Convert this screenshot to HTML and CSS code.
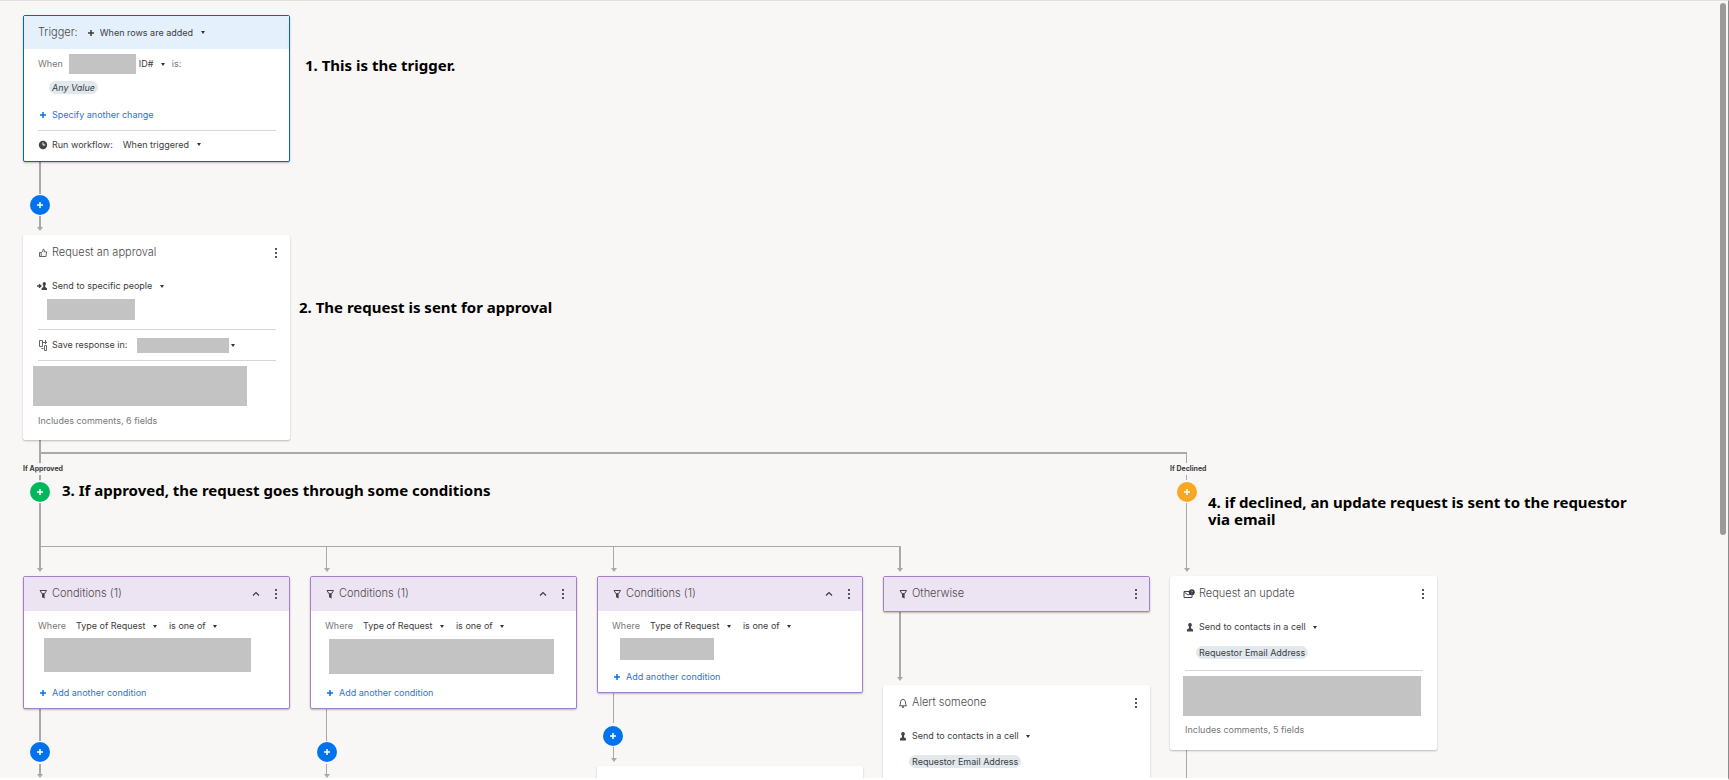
FILE: index.html
```html
<!DOCTYPE html>
<html lang="en">
<head>
<meta charset="utf-8">
<title>Workflow</title>
<link rel="stylesheet" href="styles.css">
</head>
<body>
<svg class="defs" aria-hidden="true">
  <symbol id="plus" viewBox="0 0 8 8"><path d="M4 1v6M1 4h6" stroke="currentColor" stroke-width="1.5" fill="none"/></symbol>
  <symbol id="kebab" viewBox="0 0 4 12"><path d="M1 1h2v2H1zM1 5h2v2H1zM1 9h2v2H1z" fill="currentColor"/></symbol>
  <symbol id="funnel" viewBox="0 0 10 10"><path d="M2 1.500h6.500L6.500 4.800H4z" fill="none" stroke="currentColor"/><path d="M4 4.500h2.600V9.500L4 8.200z" fill="currentColor"/></symbol>
  <symbol id="person" viewBox="0 0 10 10"><path d="M5 1a1.900 1.900 0 0 1 1 3.500V6.200L8 7.500V9.500H2V7.500L4 6.200V4.500A1.900 1.900 0 0 1 5 1z" fill="currentColor"/></symbol>
  <symbol id="up" viewBox="0 0 8 8"><path d="M1 5.500L4 2.500l3 3" fill="none" stroke="currentColor" stroke-width="1.200"/></symbol>
</svg>

<main class="canvas">
  <svg class="wires" aria-hidden="true">
    <g class="thick">
      <path d="M40 162v32M40 216v12M40 440v23M40 453H1187M40 475v5M40 503v66M40 709v32M40 764v11M900 546v23M900 612v66"/>
    </g>
    <g class="thin">
      <path d="M40 546.500H901M326.500 546v23M613.500 546v23M326.500 709v32M326.500 764v11M613.500 692v31M613.500 747v12M1186.500 453v10M1186.500 475v5M1186.500 503v66M1186.500 750v30"/>
    </g>
    <g class="heads">
      <path d="M37 227h6l-3 4zM37 568h6l-3 4zM324 568h6l-3 4zM611 568h6l-3 4zM897 568h6l-3 4zM1184 568h6l-3 4zM897 677h6l-3 4zM37 774h6l-3 4zM324 774h6l-3 4zM611 758h6l-3 4z"/>
    </g>
  </svg>

  <section class="node trigger">
    <header class="head">
      <h2>Trigger:</h2>
      <svg class="i8"><use href="#plus"/></svg>
      <label class="pick"><select aria-label="Trigger type"><option>When rows are added</option></select></label>
    </header>
    <div class="row when">
      <span class="muted">When</span><span class="mask m-col"></span>
      <label class="pick"><select aria-label="Column"><option>ID#</option></select></label>
      <span class="muted">is:</span>
    </div>
    <div class="row pills"><em class="pill">Any Value</em></div>
    <div class="row add"><button class="link"><svg class="i8"><use href="#plus"/></svg>Specify another change</button></div>
    <hr>
    <div class="row run">
      <svg class="icon" viewBox="0 0 10 10"><circle cx="5" cy="5" r="4.200" fill="#444"/><path d="M5 2.500V5h2.200" stroke="#fff" fill="none"/></svg>
      <span>Run workflow:</span>
      <label class="pick"><select aria-label="Run workflow"><option>When triggered</option></select></label>
    </div>
  </section>

  <section class="node approval">
    <header class="head">
      <svg class="icon" viewBox="0 0 10 10"><path d="M1.500 4.500h1.700v4H1.500zM3.200 4.700L4.800 3l.3-1.800c1.200-.2 1.500 .9 1 2.600h2.500l-.6 4.700H3.200" fill="none" stroke="#555" stroke-width=".9"/></svg>
      <h2>Request an approval</h2>
      <button class="more" aria-label="More"><svg><use href="#kebab"/></svg></button>
    </header>
    <div class="row send">
      <svg class="icon lead" viewBox="0 0 10 10"><path d="M0 5h3.500M2 3.200L4 5 2 6.800" fill="none" stroke="#444" stroke-width="1.300"/><path d="M7.200 1a1.800 1.900 0 0 1 1 3.400v1.700L10 7.300V9H4.600V7.300L6.300 6.100V4.400A1.800 1.900 0 0 1 7.200 1z" fill="#444"/></svg>
      <label class="pick"><select aria-label="Recipients"><option>Send to specific people</option></select></label>
    </div>
    <span class="mask m-people"></span>
    <hr>
    <div class="row save">
      <svg class="icon tall" viewBox="0 0 10 12"><path d="M1.500 1.500h3v6h-3zM6.500 6.500h2v5h-2zM3.500 9.500h2M5 3.500h4M7.500 1v4" fill="none" stroke="#666"/></svg>
      <span>Save response in:</span>
      <span class="mask m-save"></span><span class="pick"></span>
    </div>
    <hr>
    <span class="mask m-message"></span>
    <p class="note">Includes comments, 6 fields</p>
  </section>

  <section class="node cond c1">
    <header class="head">
      <svg class="icon"><use href="#funnel"/></svg><h2>Conditions (1)</h2>
      <button class="fold" aria-label="Collapse"><svg><use href="#up"/></svg></button>
      <button class="more" aria-label="More"><svg><use href="#kebab"/></svg></button>
    </header>
    <div class="row where"><span class="muted">Where</span>
      <label class="pick"><select aria-label="Field"><option>Type of Request</option></select></label>
      <label class="pick"><select aria-label="Operator"><option>is one of</option></select></label></div>
    <span class="mask m-c1"></span>
    <div class="row add"><button class="link"><svg class="i8"><use href="#plus"/></svg>Add another condition</button></div>
  </section>

  <section class="node cond c2">
    <header class="head">
      <svg class="icon"><use href="#funnel"/></svg><h2>Conditions (1)</h2>
      <button class="fold" aria-label="Collapse"><svg><use href="#up"/></svg></button>
      <button class="more" aria-label="More"><svg><use href="#kebab"/></svg></button>
    </header>
    <div class="row where"><span class="muted">Where</span>
      <label class="pick"><select aria-label="Field"><option>Type of Request</option></select></label>
      <label class="pick"><select aria-label="Operator"><option>is one of</option></select></label></div>
    <span class="mask m-c2"></span>
    <div class="row add"><button class="link"><svg class="i8"><use href="#plus"/></svg>Add another condition</button></div>
  </section>

  <section class="node cond c3">
    <header class="head">
      <svg class="icon"><use href="#funnel"/></svg><h2>Conditions (1)</h2>
      <button class="fold" aria-label="Collapse"><svg><use href="#up"/></svg></button>
      <button class="more" aria-label="More"><svg><use href="#kebab"/></svg></button>
    </header>
    <div class="row where"><span class="muted">Where</span>
      <label class="pick"><select aria-label="Field"><option>Type of Request</option></select></label>
      <label class="pick"><select aria-label="Operator"><option>is one of</option></select></label></div>
    <span class="mask m-c3"></span>
    <div class="row add"><button class="link"><svg class="i8"><use href="#plus"/></svg>Add another condition</button></div>
  </section>

  <section class="node cond otherwise">
    <header class="head">
      <svg class="icon"><use href="#funnel"/></svg><h2>Otherwise</h2>
      <button class="more" aria-label="More"><svg><use href="#kebab"/></svg></button>
    </header>
  </section>

  <section class="node alert">
    <header class="head">
      <svg class="icon" viewBox="0 0 10 10"><path d="M1.500 7.800C3 6.800 2 3.500 3.200 2.200c1-1 2.600-1 3.600 0C8 3.500 7 6.800 8.500 7.800z" fill="none" stroke="#555"/><path d="M4 9h2" stroke="#555" stroke-width="1.500"/></svg>
      <h2>Alert someone</h2>
      <button class="more" aria-label="More"><svg><use href="#kebab"/></svg></button>
    </header>
    <div class="row send">
      <svg class="icon"><use href="#person"/></svg>
      <label class="pick"><select aria-label="Recipients"><option>Send to contacts in a cell</option></select></label>
    </div>
    <div class="row pills"><span class="pill">Requestor Email Address</span></div>
  </section>

  <section class="node update">
    <header class="head">
      <svg class="icon wide" viewBox="0 0 12 10"><path d="M6 2.500H1v6h8V6M1.200 3L5 6l2-1" fill="none" stroke="#444"/><circle cx="8.800" cy="3.200" r="2.900" fill="#333"/><path d="M8 2.500c.2-1 1.800-.8 1.500 .2L8.800 3.600M8.800 4.300v.9" fill="none" stroke="#ddd" stroke-width=".6"/></svg>
      <h2>Request an update</h2>
      <button class="more" aria-label="More"><svg><use href="#kebab"/></svg></button>
    </header>
    <div class="row send">
      <svg class="icon"><use href="#person"/></svg>
      <label class="pick"><select aria-label="Recipients"><option>Send to contacts in a cell</option></select></label>
    </div>
    <div class="row pills"><span class="pill">Requestor Email Address</span></div>
    <hr>
    <span class="mask m-update"></span>
    <p class="note">Includes comments, 5 fields</p>
  </section>

  <section class="node next" aria-label="Next step"></section>

  <button class="plus p1" aria-label="Add step"><svg class="i8"><use href="#plus"/></svg></button>
  <button class="plus green p2" aria-label="Add approved step"><svg class="i8"><use href="#plus"/></svg></button>
  <button class="plus amber p3" aria-label="Add declined step"><svg class="i8"><use href="#plus"/></svg></button>
  <button class="plus p4" aria-label="Add step"><svg class="i8"><use href="#plus"/></svg></button>
  <button class="plus p5" aria-label="Add step"><svg class="i8"><use href="#plus"/></svg></button>
  <button class="plus p6" aria-label="Add step"><svg class="i8"><use href="#plus"/></svg></button>

  <span class="branch b1">If Approved</span>
  <span class="branch b2">If Declined</span>

  <p class="callout n1">1. This is the trigger.</p>
  <p class="callout n2">2. The request is sent for approval</p>
  <p class="callout n3">3. If approved, the request goes through some conditions</p>
  <p class="callout n4">4. if declined, an update request is sent to the requestor via email</p>

  <div class="scrollbar"></div>
</main>
</body>
</html>
```
FILE: styles.css
```css
* { box-sizing: border-box; }
body { margin: 0; font: 9px/14px Inter, "Liberation Sans", sans-serif; color: #3c3c3c; }
h2, p { margin: 0; }
button, select { font: inherit; color: inherit; background: none; border: 0; padding: 0; margin: 0; }
.defs { position: absolute; width: 0; height: 0; }

.canvas {
  position: relative;
  height: 100vh;
  overflow: hidden;
  background: #f8f7f5;
  border-top: 1px solid #e0e0df;
  border-right: 1px solid #8c8c8c;
  border-bottom: 2px solid #fff;
}
.wires { position: absolute; left: 0; top: -1px; width: 100%; height: calc(100% + 1px); }
.wires path { fill: none; stroke: #aaa9a8; }
.thick path { stroke-width: 2; }
.wires .heads path { fill: #aaa9a8; stroke: none; }

/* Nodes on the canvas */
.node {
  position: absolute;
  width: 267px;
  background: #fff;
  border: 1px solid #fff;
  border-radius: 2px;
  box-shadow: 0 1px 2px rgba(0, 0, 0, .25);
  padding-bottom: 12px;
}
.trigger { left: 23px; top: 14px; border-color: #0b5fd6; padding-bottom: 3px; }
.approval { left: 23px; top: 234px; padding-bottom: 11px; }
.cond { top: 575px; border-color: #a67fc9; padding-bottom: 5px; }
.c1 { left: 23px; }
.c2 { left: 310px; }
.c3 { left: 597px; width: 266px; }
.otherwise { left: 883px; padding-bottom: 0; }
.alert { left: 883px; top: 684px; padding-bottom: 40px; }
.update { left: 1170px; top: 575px; }
.next { left: 597px; top: 765px; width: 266px; height: 40px; }

.head { display: flex; align-items: center; gap: 4px; height: 34px; padding: 0 11px 0 14px; }
.head h2 { flex: 1; padding-bottom: 2px; font-size: 11px; font-weight: 300; color: #4a4a4a; white-space: nowrap; }
.trigger .head { height: 33px; background: #e4f0fc; gap: 5px; }
.trigger h2 { flex: none; margin-right: 4px; }
.cond .head { background: #ede4f3; }
.row { display: flex; align-items: center; gap: 4px; height: 20px; padding-left: 14px; white-space: nowrap; }
.muted { color: #777; }
hr { border: 0; border-top: 1px solid #d6d6d6; margin: 0 13px 0 14px; }
.mask { display: block; background: #c3c3c3; }

.icon { flex: none; width: 10px; height: 10px; color: #444; }
.lead, .wide { width: 12px; margin-left: -2px; }
.tall { height: 12px; }
.i8 { flex: none; width: 8px; height: 8px; }
.fold, .more { display: flex; }
.fold svg { width: 8px; height: 8px; }
.more { width: 4px; margin-left: 10px; color: #555; }
.more svg { width: 4px; height: 12px; }

.pick { display: inline-flex; align-items: center; gap: 7px; }
.pick::after { content: ""; border: 2px solid transparent; border-top: 3px solid #333; border-bottom: 0; }
.pick select { appearance: none; }
.pill { background: #e1e8ee; border-radius: 7px; padding: 0 3px; line-height: 13px; }
.link { display: flex; align-items: center; gap: 5px; padding-left: 1px; color: #2f6fde; }
.link svg { color: #0073ec; }
.note { padding-left: 14px; color: #777; }

.when { margin-top: 5px; gap: 3px; }
.m-col { width: 67px; height: 20px; margin-left: 3px; }
.when .pick { margin-right: 4px; }
.trigger .pills { height: 28px; padding-bottom: 2px; }
.trigger .add { height: 28px; padding-bottom: 2px; }
.run { height: 27px; }
.run .pick { margin-left: 6px; }

.send { margin-top: 6px; }
.approval .send { height: 22px; margin-top: 5px; }
.m-people { width: 88px; height: 21px; margin: 2px 0 9px 23px; }
.save { height: 30px; }
.m-save { width: 92px; height: 15px; margin-left: 6px; }
.save .pick { margin-left: -2px; gap: 0; }
.m-message { width: 214px; height: 40px; margin: 5px 0 8px 9px; }
.pills { height: 33px; padding: 0 0 2px 25px; }

.where { height: 27px; padding-top: 3px; }
.where .pick { margin-left: 6px; }
.where .pick + .pick { margin-left: 8px; }
.m-c1 { width: 207px; height: 34px; margin: 0 0 11px 20px; }
.m-c2 { width: 225px; height: 35px; margin: 1px 0 9px 18px; }
.m-c3 { width: 94px; height: 22px; margin: 0 0 7px 22px; }
.m-update { width: 238px; height: 40px; margin: 5px 0 7px 12px; }

.plus {
  position: absolute;
  display: grid;
  place-items: center;
  width: 20px;
  height: 20px;
  border-radius: 50%;
  background: #0073ec;
  color: #fff;
}
.green { background: #00b85c; }
.amber { background: #f9a825; }
.p1 { left: 30px; top: 194px; }
.p2 { left: 30px; top: 481px; }
.p3 { left: 1177px; top: 481px; }
.p4 { left: 30px; top: 741px; }
.p5 { left: 317px; top: 741px; }
.p6 { left: 603px; top: 725px; }

.branch { position: absolute; top: 462px; font-size: 7px; line-height: 11px; font-weight: 700; }
.b1 { left: 23px; }
.b2 { left: 1170px; }

.callout { position: absolute; font: bold 15px/17px "Noto Sans", sans-serif; color: #000; }
.n1 { left: 305px; top: 56px; }
.n2 { left: 299px; top: 298px; }
.n3 { left: 62px; top: 481px; }
.n4 { left: 1208px; top: 493px; width: 430px; }

.scrollbar { position: absolute; right: 2px; top: 2px; width: 6px; height: 68.500%; border-radius: 3px; background: #9b9a98; }
```
